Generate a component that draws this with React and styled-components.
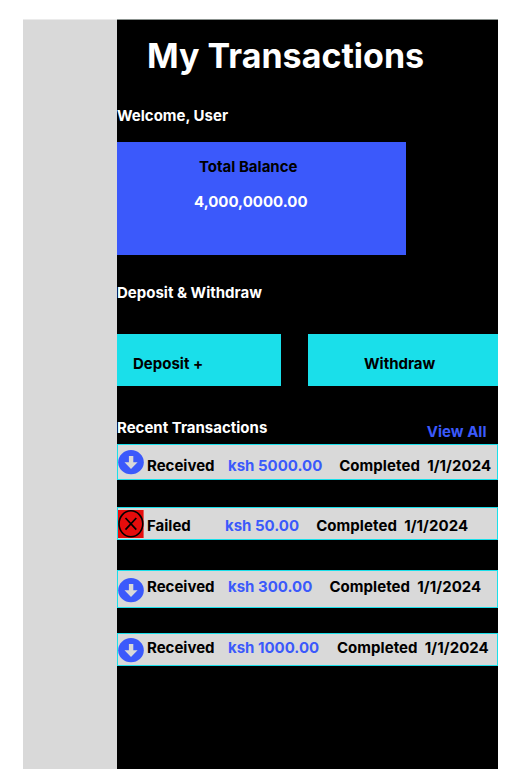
import React from "react";
import styled, { createGlobalStyle } from "styled-components";

const GlobalStyle = createGlobalStyle`
  * { box-sizing: border-box; }
  body { margin: 0; background: #fff; }
`;

const Page = styled.div`
  width: 521px;
  height: 782px;
  padding: 19px 0 0 23px;
  background: #fff;
  font: 700 15px/18px Inter, sans-serif;
  color: #000;
`;

const Frame = styled.div`
  display: flex;
  width: 475px;
  height: 750px;
`;

const Sidebar = styled.aside`
  flex: 0 0 94px;
  border-top: 1px solid #ebebeb;
  background: #d9d9d9;
`;

const Main = styled.main`
  flex: 1;
  min-width: 0;
  border-top: 1px solid #8b928f;
  background: #000;
`;

const Title = styled.h1`
  margin: 0;
  padding: 15px 0 0 30px;
  font-size: 34px;
  line-height: 42px;
  font-weight: 700;
  color: #fff;
  white-space: nowrap;
`;

const Heading = styled.h2`
  margin: ${(p) => p.$top || 0}px 0 0;
  font-size: inherit;
  line-height: 18px;
  font-weight: 700;
  color: #fff;
  white-space: nowrap;
`;

const BalanceCard = styled.section`
  width: 289px;
  height: 113px;
  margin-top: 17px;
  padding-top: 16px;
  background: #3b59fb;
`;

const BalanceLabel = styled.div`
  padding-left: 82px;
`;

const BalanceValue = styled.div`
  margin-top: 17px;
  padding-left: 77px;
  color: #fff;
`;

const Actions = styled.div`
  display: flex;
  justify-content: space-between;
  margin-top: 32px;
`;

const ActionButton = styled.button`
  width: ${(p) => p.$width}px;
  height: 52px;
  padding: 8px 0 0 ${(p) => p.$indent}px;
  border: 0;
  background: #1adfea;
  color: #000;
  font: inherit;
  text-align: left;
`;

const ListHeader = styled.div`
  display: flex;
  justify-content: space-between;
  align-items: flex-start;
  height: 25px;
  margin-top: 33px;
  padding-right: 11.5px;
`;

const ViewAll = styled.a`
  margin-top: 4px;
  color: #3b59fb;
`;

const Row = styled.div`
  display: flex;
  align-items: flex-start;
  height: ${(p) => p.$height}px;
  margin-bottom: ${(p) => p.$after}px;
  border: 1px solid #1adfea;
  background: #d9d9d9;
  white-space: pre;
`;

const IconSlot = styled.div`
  flex: 0 0 26px;
  margin: ${(p) => p.$top}px 0 0 -0.5px;
  svg { display: block; }
`;

const Cell = styled.span`
  flex: none;
  width: ${(p) => (p.$width ? `${p.$width}px` : "auto")};
  margin-top: ${(p) => p.$top}px;
  margin-left: ${(p) => p.$left || 0}px;
  color: ${(p) => p.$color || "#000"};
`;

const DateCell = styled(Cell)`
  letter-spacing: 0.06px;
`;

const ReceivedIcon = () => (
  <svg width="26" height="25" viewBox="0 0 26 25">
    <ellipse cx="13" cy="12.2" rx="12.8" ry="12.1" fill="#3b59fb" />
    <path d="M10.9 6h4.4v6.2h4.3L13 19 6.5 12.2h4.4z" fill="#d9d9d9" />
  </svg>
);

const FailedIcon = () => (
  <svg width="26" height="28" viewBox="0 0 26 28">
    <rect width="25.6" height="28" fill="#e60c0c" />
    <ellipse cx="12.9" cy="13.8" rx="11.9" ry="13" fill="none" stroke="#000" strokeWidth="1.6" />
    <path d="M7.5 8l10.8 11.6M18.3 8L7.5 19.6" stroke="#000" strokeWidth="1.7" />
  </svg>
);

const transactions = [
  { label: "Received", amount: "ksh 5000.00", labelW: 81, amountW: 111.2, height: 36, after: 27, text: 12, icon: 5 },
  { label: "Failed", amount: "ksh 50.00", labelW: 78, amountW: 91.2, height: 33, after: 30, text: 9, icon: 2, failed: true },
  { label: "Received", amount: "ksh 300.00", labelW: 81, amountW: 101.4, height: 38, after: 25, text: 7, icon: 6.5 },
  { label: "Received", amount: "ksh 1000.00", labelW: 81, amountW: 108.9, height: 33, after: 0, text: 5, icon: 4 },
];

const Transaction = ({ item }) => (
  <Row $height={item.height} $after={item.after}>
    <IconSlot $top={item.icon}>{item.failed ? <FailedIcon /> : <ReceivedIcon />}</IconSlot>
    <Cell $top={item.text} $left={3.5} $width={item.labelW}>{item.label}</Cell>
    <Cell $top={item.text} $width={item.amountW} $color="#3b59fb">{item.amount}</Cell>
    <DateCell $top={item.text}>{"Completed  1/1/2024"}</DateCell>
  </Row>
);

export default function App() {
  return (
    <>
      <GlobalStyle />
      <Page>
        <Frame>
          <Sidebar />
          <Main>
            <Title>My Transactions</Title>
            <Heading $top={30}>Welcome, User</Heading>
            <BalanceCard>
              <BalanceLabel>Total Balance</BalanceLabel>
              <BalanceValue>4,000,0000.00</BalanceValue>
            </BalanceCard>
            <Heading $top={29}>Deposit &amp; Withdraw</Heading>
            <Actions>
              <ActionButton $width={164} $indent={16}>Deposit +</ActionButton>
              <ActionButton $width={190} $indent={56}>Withdraw</ActionButton>
            </Actions>
            <ListHeader>
              <Heading>Recent Transactions</Heading>
              <ViewAll>View All</ViewAll>
            </ListHeader>
            {transactions.map((item, i) => (
              <Transaction key={i} item={item} />
            ))}
          </Main>
        </Frame>
      </Page>
    </>
  );
}
